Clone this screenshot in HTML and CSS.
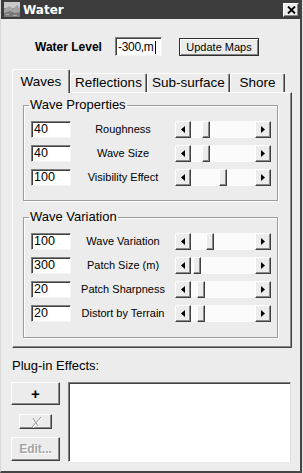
FILE: index.html
```html
<!DOCTYPE html>
<html>
<head>
<meta charset="utf-8">
<title>Water</title>
<link rel="stylesheet" href="styles.css">
</head>
<body>
<div class="window">
  <div class="titlebar">
    <svg class="appicon" width="16" height="15" viewBox="0 0 16 15">
      <rect width="16" height="15" fill="#8e8e8e"/>
      <rect width="16" height="6" fill="#c9c9c9"/>
      <polygon points="0,8 5,4 9,7 13,3 16,6 16,15 0,15" fill="#a4a4a4"/>
      <polygon points="0,11 6,9 11,11 16,10 16,15 0,15" fill="#7a7a7a"/>
      <rect x="2" y="12" width="3" height="1" fill="#b8b8b8"/>
      <rect x="9" y="13" width="4" height="1" fill="#b0b0b0"/>
    </svg>
    <span class="title">Water</span>
    <div class="close">
      <svg width="9" height="8" viewBox="0 0 9 8"><path d="M1 0.5 L8 7.5 M8 0.5 L1 7.5" stroke="#000" stroke-width="1.8"/></svg>
    </div>
  </div>

  <div class="level-row">
    <span class="level-label">Water Level</span>
    <div class="textbox level-input">-300,m<span class="caret"></span></div>
    <div class="button update">Update Maps</div>
  </div>

  <div class="tabs">
    <div class="tab active t-waves">Waves</div>
    <div class="tab t-refl">Reflections</div>
    <div class="tab t-sub">Sub-surface</div>
    <div class="tab t-shore">Shore</div>
  </div>

  <div class="panel">
    <fieldset class="group g1">
      <legend>Wave Properties</legend>
      <div class="rows">
        <div class="prow"><div class="textbox num">40</div><span class="plabel">Roughness</span>
          <div class="scrollbar"><div class="sbtn"><svg width="4" height="7" viewBox="0 0 4 7"><polygon points="4,0 0,3.5 4,7" fill="#000"/></svg></div><div class="track"><div class="thumb" style="margin-left:11px"></div></div><div class="sbtn"><svg width="4" height="7" viewBox="0 0 4 7"><polygon points="0,0 4,3.5 0,7" fill="#000"/></svg></div></div>
        </div>
        <div class="prow"><div class="textbox num">40</div><span class="plabel">Wave Size</span>
          <div class="scrollbar"><div class="sbtn"><svg width="4" height="7" viewBox="0 0 4 7"><polygon points="4,0 0,3.5 4,7" fill="#000"/></svg></div><div class="track"><div class="thumb" style="margin-left:11px"></div></div><div class="sbtn"><svg width="4" height="7" viewBox="0 0 4 7"><polygon points="0,0 4,3.5 0,7" fill="#000"/></svg></div></div>
        </div>
        <div class="prow"><div class="textbox num">100</div><span class="plabel">Visibility Effect</span>
          <div class="scrollbar"><div class="sbtn"><svg width="4" height="7" viewBox="0 0 4 7"><polygon points="4,0 0,3.5 4,7" fill="#000"/></svg></div><div class="track"><div class="thumb" style="margin-left:28px"></div></div><div class="sbtn"><svg width="4" height="7" viewBox="0 0 4 7"><polygon points="0,0 4,3.5 0,7" fill="#000"/></svg></div></div>
        </div>
      </div>
    </fieldset>

    <fieldset class="group g2">
      <legend>Wave Variation</legend>
      <div class="rows">
        <div class="prow"><div class="textbox num">100</div><span class="plabel">Wave Variation</span>
          <div class="scrollbar"><div class="sbtn"><svg width="4" height="7" viewBox="0 0 4 7"><polygon points="4,0 0,3.5 4,7" fill="#000"/></svg></div><div class="track"><div class="thumb" style="margin-left:15px"></div></div><div class="sbtn"><svg width="4" height="7" viewBox="0 0 4 7"><polygon points="0,0 4,3.5 0,7" fill="#000"/></svg></div></div>
        </div>
        <div class="prow"><div class="textbox num">300</div><span class="plabel">Patch Size (m)</span>
          <div class="scrollbar"><div class="sbtn"><svg width="4" height="7" viewBox="0 0 4 7"><polygon points="4,0 0,3.5 4,7" fill="#000"/></svg></div><div class="track"><div class="thumb" style="margin-left:2px"></div></div><div class="sbtn"><svg width="4" height="7" viewBox="0 0 4 7"><polygon points="0,0 4,3.5 0,7" fill="#000"/></svg></div></div>
        </div>
        <div class="prow"><div class="textbox num">20</div><span class="plabel">Patch Sharpness</span>
          <div class="scrollbar"><div class="sbtn"><svg width="4" height="7" viewBox="0 0 4 7"><polygon points="4,0 0,3.5 4,7" fill="#000"/></svg></div><div class="track"><div class="thumb" style="margin-left:6px"></div></div><div class="sbtn"><svg width="4" height="7" viewBox="0 0 4 7"><polygon points="0,0 4,3.5 0,7" fill="#000"/></svg></div></div>
        </div>
        <div class="prow"><div class="textbox num">20</div><span class="plabel">Distort by Terrain</span>
          <div class="scrollbar"><div class="sbtn"><svg width="4" height="7" viewBox="0 0 4 7"><polygon points="4,0 0,3.5 4,7" fill="#000"/></svg></div><div class="track"><div class="thumb" style="margin-left:6px"></div></div><div class="sbtn"><svg width="4" height="7" viewBox="0 0 4 7"><polygon points="0,0 4,3.5 0,7" fill="#000"/></svg></div></div>
        </div>
      </div>
    </fieldset>
  </div>

  <div class="plugin-label">Plug-in Effects:</div>
  <div class="plugin-row">
    <div class="btncol">
      <div class="button add">+</div>
      <div class="button remove">
        <svg width="13" height="12" viewBox="0 0 13 12">
          <path d="M3 11 L12 1 M4 2 L9 10" stroke="#fff" stroke-width="1" fill="none" transform="translate(1,1)"/>
          <path d="M3 11 L12 1 M4 2 L9 10" stroke="#9c9c9c" stroke-width="1" fill="none"/>
        </svg>
      </div>
      <div class="button edit">Edit...</div>
    </div>
    <div class="listbox"></div>
  </div>
</div>
</body>
</html>
```

FILE: styles.css
```css
html, body {
  margin: 0;
  padding: 0;
}
body {
  background: #e2e2e2;
  font-family: "Liberation Sans", Arial, sans-serif;
  color: #000;
}
.window {
  width: 302px;
  height: 473px;
  box-sizing: border-box;
  background: #ececec;
  border-left: 1px solid #d8d8d8;
  border-right: 2px solid #454545;
  border-bottom: 2px solid #454545;
  display: flex;
  flex-direction: column;
}
.titlebar {
  height: 19px;
  background: #3c3c3c;
  display: flex;
  align-items: center;
  padding-left: 3px;
}
.appicon {
  display: block;
}
.title {
  margin-left: 3px;
  font-family: "DejaVu Sans", sans-serif;
  font-weight: bold;
  font-size: 12px;
  color: #fff;
}
.close {
  margin-left: auto;
  margin-right: 1px;
  width: 16px;
  height: 14px;
  box-sizing: border-box;
  background: #ececec;
  border-top: 1px solid #fff;
  border-left: 1px solid #fff;
  border-right: 1px solid #404040;
  border-bottom: 1px solid #404040;
  box-shadow: inset -1px -1px 0 #8a8a8a;
  display: flex;
  align-items: center;
  justify-content: center;
}
.close svg { display: block; }

.level-row {
  margin-top: 18px;
  display: flex;
  align-items: center;
  height: 19px;
}
.level-label {
  margin-left: 34px;
  width: 80px;
  font-weight: bold;
  font-size: 12px;
}
.textbox {
  box-sizing: border-box;
  background: #fff;
  border: 1px solid;
  border-color: #808080 #f4f4f4 #f4f4f4 #808080;
  box-shadow: inset 1px 1px 0 #404040;
  padding-left: 2px;
  font-size: 12.5px;
  line-height: 15px;
  white-space: nowrap;
}
.level-input {
  width: 47px;
  height: 19px;
  padding-top: 1px;
  display: flex;
  align-items: center;
  font-size: 12px;
  letter-spacing: -0.3px;
}
.caret {
  display: inline-block;
  width: 1px;
  height: 13px;
  background: #000;
  margin-left: 1px;
}
.button {
  box-sizing: border-box;
  background: #ececec;
  border-top: 1px solid #fff;
  border-left: 1px solid #fff;
  border-right: 1px solid #404040;
  border-bottom: 1px solid #404040;
  box-shadow: inset -1px -1px 0 #8a8a8a;
  display: flex;
  align-items: center;
  justify-content: center;
}
.update {
  margin-left: 17px;
  width: 80px;
  height: 18px;
  border: 1px solid #303030;
  box-shadow: inset 1px 1px 0 #fff, inset -1px -1px 0 #808080;
  font-size: 11px;
}

.tabs {
  margin-top: 13px;
  margin-left: 11px;
  height: 23px;
  display: flex;
  align-items: flex-end;
}
.tab {
  box-sizing: border-box;
  height: 19px;
  padding-top: 1px;
  background: #ececec;
  border-top: 1px solid #fff;
  border-left: 1px solid #fff;
  border-right: 1px solid #404040;
  border-radius: 2px 2px 0 0;
  box-shadow: inset -1px 0 0 #8a8a8a;
  text-align: center;
  font-size: 13.5px;
  line-height: 16px;
}
.tab.active {
  height: 24px;
  padding-top: 4px;
  margin-bottom: -1px;
  position: relative;
  z-index: 1;
}
.t-waves { width: 58px; }
.t-refl { width: 77px; }
.t-sub { width: 83px; }
.t-shore { width: 55px; }

.panel {
  margin-left: 11px;
  width: 280px;
  height: 256px;
  box-sizing: border-box;
  border-top: 1px solid #fff;
  border-left: 1px solid #fff;
  border-right: 1px solid #404040;
  border-bottom: 1px solid #404040;
  box-shadow: inset -1px -1px 0 #8a8a8a;
  padding: 5px 0 0 10px;
}
.group {
  margin: 0;
  width: 255px;
  box-sizing: border-box;
  min-inline-size: 0;
  border: 1px solid #9c9c9c;
  box-shadow: 1px 1px 0 #fff, inset 1px 1px 0 #fff;
  padding: 9px 0 14px 7px;
}
.group legend {
  margin-left: -2px;
  padding: 0 1px;
  font-size: 13px;
  line-height: 14px;
}
.g2 {
  margin-top: 9px;
  padding-bottom: 15px;
}
.rows {
  display: flex;
  flex-direction: column;
  gap: 7px;
}
.prow {
  display: flex;
  align-items: center;
  height: 17px;
}
.num {
  width: 40px;
  height: 17px;
}
.plabel {
  width: 104px;
  text-align: center;
  font-size: 11px;
  line-height: 17px;
  white-space: nowrap;
}
.scrollbar {
  display: flex;
  width: 96px;
  height: 17px;
}
.sbtn, .thumb {
  box-sizing: border-box;
  height: 17px;
  background: #ececec;
  border-top: 1px solid #fff;
  border-left: 1px solid #fff;
  border-right: 1px solid #404040;
  border-bottom: 1px solid #404040;
  box-shadow: inset -1px -1px 0 #8a8a8a;
}
.sbtn {
  width: 16px;
  display: flex;
  align-items: center;
  justify-content: center;
}
.sbtn svg { display: block; }
.track {
  flex: 1;
  display: flex;
  background: #fbfbfb;
}
.thumb {
  width: 8px;
}

.plugin-label {
  margin-top: 10px;
  margin-left: 11px;
  font-size: 13px;
  line-height: 15px;
}
.plugin-row {
  margin-top: 9px;
  margin-left: 10px;
  display: flex;
  gap: 8px;
}
.btncol {
  width: 49px;
  display: flex;
  flex-direction: column;
  align-items: center;
}
.add {
  width: 49px;
  height: 23px;
  font-weight: bold;
  font-size: 15px;
}
.remove {
  margin-top: 9px;
  width: 33px;
  height: 15px;
}
.edit {
  margin-top: 8px;
  width: 49px;
  height: 24px;
  font-weight: bold;
  font-size: 12px;
  color: #a4a4a4;
  text-shadow: 1px 1px 0 #fff;
}
.listbox {
  width: 223px;
  height: 80px;
  box-sizing: border-box;
  background: #fff;
  border: 1px solid;
  border-color: #808080 #dcdcdc #fff #808080;
  box-shadow: inset 1px 1px 0 #404040;
}
```
